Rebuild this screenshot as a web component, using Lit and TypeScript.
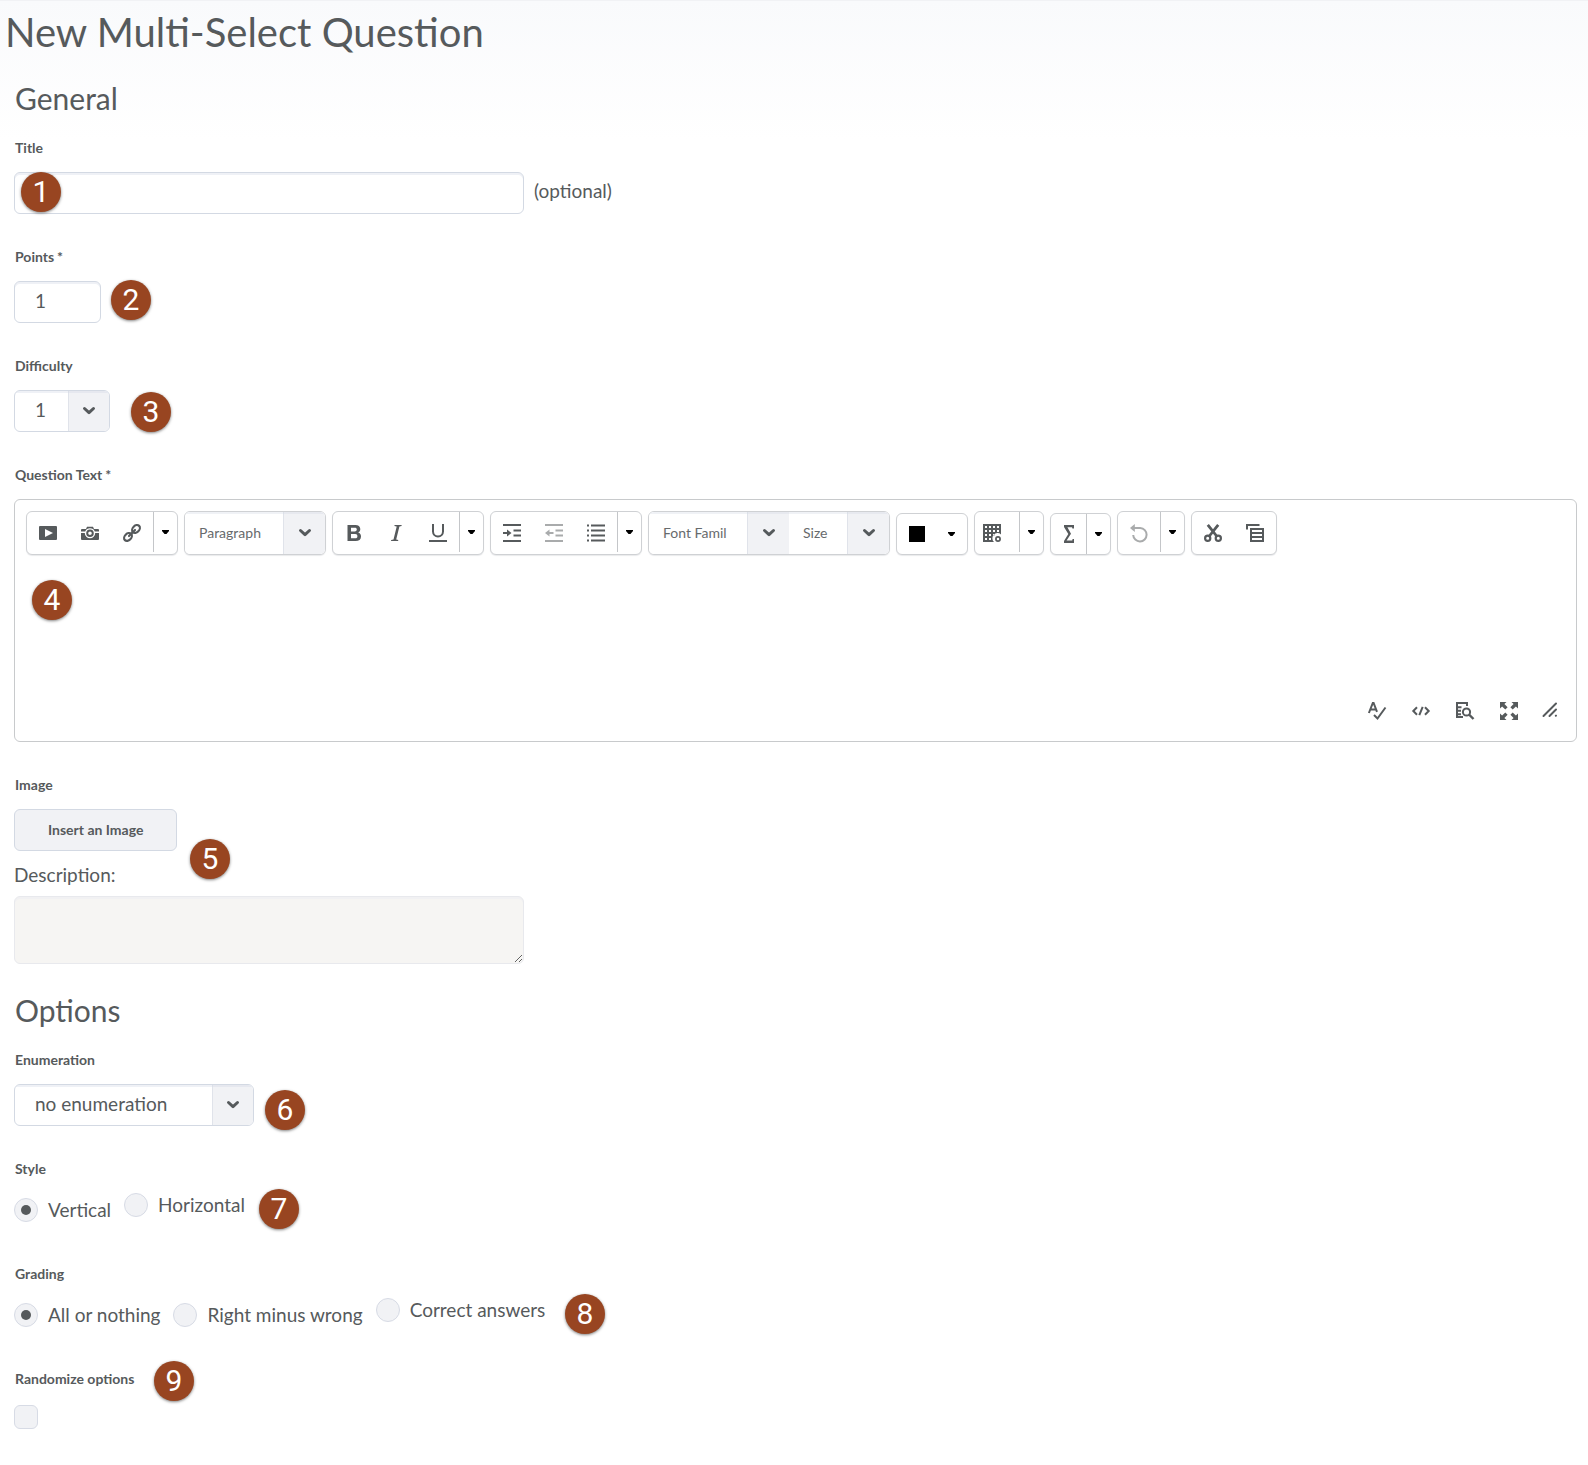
import { LitElement, html, css, svg, TemplateResult } from "lit";
import { customElement } from "lit/decorators.js";

const icon = (body: TemplateResult) =>
  html`<svg class="icon" viewBox="0 0 18 18" width="18" height="18" aria-hidden="true">${body}</svg>`;

const icons = {
  video: svg`<path fill="currentColor" fill-rule="evenodd" d="M1 2h16a1 1 0 0 1 1 1v12a1 1 0 0 1-1 1H1a1 1 0 0 1-1-1V3a1 1 0 0 1 1-1zM6 5v8l8-4z"/>`,
  camera: svg`<path fill="currentColor" d="M1 5h4l1-2.200h6L13 5h4a1 1 0 0 1 1 1v1.500h-4.200a5.200 5.200 0 0 0-9.600 0H0V6a1 1 0 0 1 1-1zM0 9h3.800a5.200 5.200 0 0 0 10.400 0H18v6a1 1 0 0 1-1 1H1a1 1 0 0 1-1-1z"/><circle cx="9" cy="9.300" r="2.800" fill="none" stroke="currentColor" stroke-width="2"/>`,
  link: svg`<g fill="none" stroke="currentColor" stroke-width="2.200"><ellipse cx="13" cy="5" rx="4.400" ry="3.300" transform="rotate(-45 13 5)"/><ellipse cx="5" cy="13" rx="4.400" ry="3.300" transform="rotate(-45 5 13)"/><path d="M6 12l6-6" stroke-linecap="round"/></g>`,
  bold: svg`<path fill="currentColor" fill-rule="evenodd" d="M2.500 1h7.800c3.200 0 5 1.600 5 4.100 0 1.700-.8 2.900-2.200 3.500 1.900.5 2.900 1.900 2.900 3.800 0 2.900-2 4.600-5.500 4.600h-8zM6 3.800v3.600h3.800c1.300 0 2-.6 2-1.800s-.7-1.800-2-1.800zM6 10.100v4.100h4.200c1.500 0 2.200-.7 2.200-2.050s-.7-2.050-2.200-2.050z"/>`,
  italic: svg`<path fill="currentColor" d="M7.600 1h7v1.100l-2.200.3-3.200 13.200 2.100.3-.2 1.100H4l.2-1.100 2.300-.3L9.700 2.400l-2.300-.3z"/>`,
  underline: svg`<path fill="none" stroke="currentColor" stroke-width="2" d="M4 0v7.500a5 5 0 0 0 10 0V0M0 17h18"/>`,
  indent: svg`<path fill="none" stroke="currentColor" stroke-width="2" d="M0 1h18M10.500 6.500H18M10.500 11.500H18M0 17h18M0 9h5"/><path fill="currentColor" d="M4 5.500L8.500 9 4 12.500z"/>`,
  outdent: svg`<path fill="none" stroke="currentColor" stroke-width="2" d="M0 1h18M10.500 6.500H18M10.500 11.500H18M0 17h18M3.500 9h5"/><path fill="currentColor" d="M4.500 5.500L0 9l4.500 3.500z"/>`,
  list: svg`<path fill="none" stroke="currentColor" stroke-width="2" d="M4 1.500h14M4 6.500h14M4 11.500h14M4 16.500h14M0 1.500h2M0 6.500h2M0 11.500h2M0 16.500h2"/>`,
  table: svg`<path fill="currentColor" fill-rule="evenodd" d="M0 0h18v10.500a5 5 0 0 0-7 7.500H0zM2 2v2h2V2zM6 2v2h2V2zM10 2v2h2V2zM14 2v2h2V2zM2 6v2h2V6zM6 6v2h2V6zM10 6v2h2V6zM14 6v2h2V6zM2 10v2h2v-2zM6 10v2h2v-2zM10 10v1.500h1.500V10zM2 14v2h2v-2zM6 14v2h2v-2z"/><circle cx="15" cy="15" r="2.100" fill="none" stroke="currentColor" stroke-width="1.700"/>`,
  sigma: svg`<path fill="currentColor" d="M4 0h10v3.600h-1.600L12 2.200H7.400L11 8.800l-4.400 6.700h5.600l.4-1.600H14V18H4v-1.900l4.300-7.200L4 2z"/>`,
  undo: svg`<path fill="none" stroke="currentColor" stroke-width="2" d="M3 4h7.200a6.700 6.700 0 1 1-7 7"/><path fill="currentColor" d="M4.800 0v8L0 4z"/>`,
  cut: svg`<g fill="none" stroke="currentColor" stroke-width="2.200"><circle cx="3.700" cy="14.300" r="2.600"/><circle cx="14.300" cy="14.300" r="2.600"/></g><path fill="none" stroke="currentColor" stroke-width="2.800" d="M3.800 0.800L12.600 12M14.200 0.800L5.400 12"/>`,
  copy: svg`<path fill="none" stroke="currentColor" stroke-width="2" d="M1 5.500V1h12.500M5 5h12v12H5zM5 9h12M5 13h12"/>`,
  spell: svg`<path fill="none" stroke="currentColor" stroke-width="2" d="M.9 11L4.800 1h.8L9 9.800M2.500 7.500H8M6 13l3.500 3.500L17.500 5.500"/>`,
  source: svg`<path fill="none" stroke="currentColor" stroke-width="2" d="M5 5.200L1.300 9 5 12.800M13 5.200L16.700 9 13 12.800M10.700 4.800L7.300 13.200"/>`,
  preview: svg`<path fill="none" stroke="currentColor" stroke-width="2" d="M1 0v16M0 1h11V4M2 5.200h3.500M2 8.700h3M2 12.200h3M0 15h7"/><circle cx="10.500" cy="10" r="3.600" fill="none" stroke="currentColor" stroke-width="2"/><path stroke="currentColor" stroke-width="2.400" d="M13 12.500l4.500 4.500"/>`,
  full: svg`<path fill="currentColor" d="M0 0h6.500L4.400 2.100 7.600 5.300 5.300 7.600 2.100 4.400 0 6.500zM18 0v6.500L15.900 4.400l-3.200 3.200-2.300-2.300 3.200-3.200L11.500 0zM0 18v-6.500l2.100 2.100 3.200-3.200 2.300 2.300-3.200 3.200L6.500 18zM18 18h-6.500l2.100-2.100-3.200-3.200 2.300-2.300 3.200 3.200 2.100-2.100z"/>`,
  grip: svg`<path fill="none" stroke="currentColor" stroke-width="2" stroke-linecap="round" d="M2.500 16L15 3.500M8.500 16L15 9.500M14.800 15.800l.2-.2"/>`,
};

const caret = html`<svg viewBox="0 0 7 4" width="7" height="4" aria-hidden="true"><path fill="#000" d="M0 0h7v1L4.500 4h-2L0 1z"/></svg>`;

const chevron = html`<span class="arrow" aria-hidden="true"
  ><svg viewBox="0 0 14 10" width="14" height="10"><path d="M2.500 2.500L7 6.700l4.500-4.200" fill="none" stroke="currentColor" stroke-width="3" stroke-linecap="round" stroke-linejoin="round"/></svg
></span>`;

const tool = (name: string, body: TemplateResult, cls = "") =>
  html`<button type="button" class="tool ${cls}" aria-label=${name}>${icon(body)}</button>`;

const more = (name: string, cls = "") =>
  html`<button type="button" class="more ${cls}" aria-label=${name}>${caret}</button>`;

const badge = (n: number) => html`<span class="badge b${n}">${n}</span>`;

@customElement("app-root")
export class AppRoot extends LitElement {
  static styles = css`
    :host {
      display: block;
      min-height: 100vh;
      box-sizing: border-box;
      padding: 7px 11px 20px 14px;
      border-top: 1px solid #f1f2f5;
      background: linear-gradient(#f9fafc, #ffffff 140px);
      font-family: Lato, "Liberation Sans", sans-serif;
      font-size: 19px;
      line-height: 24px;
      color: #565a5c;
    }
    *, *::before { box-sizing: border-box; }
    h1, h2 { margin: 0; font-weight: 400; }
    h1 { font-size: 40px; line-height: 48px; margin: 0 0 24px -9px; }
    h2 { font-size: 30px; line-height: 36px; margin-bottom: 22px; padding-left: 1px; }
    form { margin: 0; }
    button, input, select, textarea { font: inherit; color: inherit; margin: 0; }
    button { padding: 0; border: 0; background: none; cursor: pointer; }
    .field { position: relative; margin: 0 0 33px; padding: 0; border: 0; min-width: 0; }
    .field.last-general { margin-bottom: 28px; }
    .label {
      display: block;
      width: max-content;
      padding: 0 1px;
      margin-bottom: 14px;
      font-size: 14px;
      line-height: 20px;
      font-weight: 700;
    }
    .star { margin-left: 3px; }
    .line { display: flex; align-items: center; gap: 10px; }
    .hint { padding-bottom: 4px; }
    .text {
      display: block;
      height: 42px;
      padding: 0 20px 4px;
      border: 1px solid #d3d9e3;
      border-radius: 6px;
      background: #fff;
      box-shadow: inset 0 2px 0 #eff1f6;
    }
    .wide { width: 100%; max-width: 510px; }
    .points { width: 87px; }
    .pick {
      display: grid;
      grid-template-columns: 1fr auto;
      width: max-content;
      max-width: 100%;
      height: 42px;
      overflow: hidden;
      border: 1px solid #d3d9e3;
      border-radius: 6px;
      background: #fff;
    }
    .pick select {
      grid-area: 1 / 1 / 2 / 3;
      width: 100%;
      height: 100%;
      min-width: 0;
      padding: 0 40px 2px 20px;
      border: 0;
      appearance: none;
      background: transparent;
      box-shadow: inset 0 2px 0 rgba(210, 215, 230, 0.35);
      z-index: 1;
    }
    .arrow {
      grid-area: 1 / 2;
      display: flex;
      align-items: center;
      justify-content: center;
      width: 41px;
      border-left: 1px solid #e0e3ea;
      background: #f1f2f5;
    }
    .level { width: 96px; }
    .enumeration { width: 240px; }
    .editor {
      display: flex;
      flex-direction: column;
      border: 1px solid #c8cacc;
      border-radius: 6px;
      background: #fff;
    }
    .toolbar { display: flex; flex-wrap: wrap; align-items: flex-end; gap: 6px; padding: 11px 11px 0; }
    .group {
      display: flex;
      height: 44px;
      overflow: hidden;
      border: 1px solid #cfd1d4;
      border-radius: 6px;
      background: #fff;
      box-shadow: 0 1px 1px #e9eaec;
    }
    .low { height: 42px; }
    .tool { display: flex; align-items: center; justify-content: center; width: 42px; }
    .off { opacity: 0.5; }
    .slim { width: 35px; }
    .grid { width: 44px; justify-content: flex-start; padding-left: 8px; }
    .more {
      display: flex;
      align-items: center;
      justify-content: center;
      width: 24px;
      height: 40px;
      border-left: 1px solid #c4c6c9;
    }
    .low .more { height: 100%; }
    .plain { border-left: 0; width: 31px; }
    .swatch { display: flex; align-items: center; padding-left: 12px; width: 39px; }
    .swatch span { width: 16px; height: 16px; background: #000; }
    .icon { display: block; overflow: visible; }
    .group .pick { height: 100%; border: 0; border-radius: 0; }
    .group select { padding: 0 42px 0 14px; font-size: 14px; opacity: 0.9; }
    .group .arrow { width: 42px; }
    .paragraph { width: 140px; }
    .family { width: 140px; }
    .size { width: 100px; }
    .writing {
      display: block;
      width: 100%;
      height: 135px;
      padding: 16px 20px;
      border: 0;
      outline: 0;
      resize: none;
      background: transparent;
    }
    .status { display: flex; justify-content: flex-end; gap: 2px; padding: 0 8px 10px; }
    .status .tool { height: 41px; }
    .status .grip { width: 36px; height: 37px; }
    .insert {
      display: block;
      height: 42px;
      padding: 0 33px;
      margin-bottom: 12px;
      border: 1px solid #d3d9e3;
      border-radius: 6px;
      background: #f1f2f5;
      font-size: 14px;
      font-weight: 700;
    }
    .caption { display: block; width: max-content; margin-bottom: 9px; }
    .description {
      display: block;
      height: 68px;
      padding: 10px 20px;
      border: 1px solid #e8e9ed;
      border-radius: 6px;
      background: #f6f5f3;
      box-shadow: inset 0 2px 0 #f1f1f3;
    }
    .choices { display: flex; flex-wrap: wrap; gap: 13px; min-height: 38px; }
    .choice { display: flex; align-items: center; gap: 10px; height: 24px; margin-top: 5px; }
    .choice:last-child { margin-top: 0; }
    .mark {
      display: grid;
      place-items: center;
      flex: none;
      width: 24px;
      height: 24px;
      appearance: none;
      border: 1px solid #d7dbe5;
      border-radius: 50%;
      background: #f1f2f5;
    }
    .mark[type="radio"]:checked::before {
      content: "";
      width: 10px;
      height: 10px;
      border-radius: 50%;
      background: #565a5c;
    }
    .box { border-radius: 6px; margin-top: 16px; }
    .badge {
      position: absolute;
      z-index: 2;
      width: 40px;
      height: 40px;
      border-radius: 50%;
      background: #984521;
      box-shadow: 0 1px 3px rgba(0, 0, 0, 0.5);
      color: #fff;
      font: 400 30px/40px Roboto, "Liberation Sans", sans-serif;
      text-align: center;
      pointer-events: none;
    }
    .b1 { left: 7px; top: 34px; }
    .b2 { left: 97px; top: 33px; }
    .b3 { left: 117px; top: 36px; }
    .b4 { left: 18px; top: 115px; }
    .b5 { left: 176px; top: 64px; }
    .b6 { left: 251px; top: 40px; }
    .b7 { left: 245px; top: -4px; }
    .b8 { left: 551px; top: -4px; }
    .b9 { left: 140px; top: -8px; }
  `;

  private choices(name: string, items: string[]) {
    return html`<div class="choices">
      ${items.map(
        (item, i) => html`<label class="choice"><input class="mark" type="radio" name=${name} ?checked=${i === 0} />${item}</label>`
      )}
    </div>`;
  }

  render() {
    return html`
      <h1>New Multi-Select Question</h1>
      <form>
        <h2>General</h2>
        <div class="field">
          <label class="label" for="title">Title</label>
          <div class="line"><input class="text wide" id="title" type="text" /><span class="hint">(optional)</span></div>
          ${badge(1)}
        </div>
        <div class="field">
          <label class="label" for="points">Points<span class="star">*</span></label>
          <input class="text points" id="points" type="text" .value=${"1"} />
          ${badge(2)}
        </div>
        <div class="field">
          <label class="label" for="difficulty">Difficulty</label>
          <div class="pick level"><select id="difficulty"><option>1</option></select>${chevron}</div>
          ${badge(3)}
        </div>
        <div class="field">
          <label class="label" for="question">Question Text<span class="star">*</span></label>
          <div class="editor">
            <div class="toolbar">
              <div class="group">
                ${tool("Insert Stuff", icons.video)}${tool("Add Image", icons.camera)}${tool("Insert Quicklink", icons.link)}${more("More insert options")}
              </div>
              <div class="group">
                <div class="pick paragraph"><select aria-label="Format"><option>Paragraph</option></select>${chevron}</div>
              </div>
              <div class="group">
                ${tool("Bold", icons.bold)}${tool("Italic", icons.italic)}${tool("Underline", icons.underline)}${more("More text styles")}
              </div>
              <div class="group">
                ${tool("Indent", icons.indent)}${tool("Outdent", icons.outdent, "off")}${tool("Unordered List", icons.list)}${more("More list options")}
              </div>
              <div class="group">
                <div class="pick family"><select aria-label="Font family"><option>Font Famil</option></select>${chevron}</div>
                <div class="pick size"><select aria-label="Font size"><option>Size</option></select>${chevron}</div>
              </div>
              <div class="group low">
                <button type="button" class="swatch" aria-label="Text color"><span></span></button>${more("Choose color", "plain")}
              </div>
              <div class="group">${tool("Table", icons.table, "grid")}${more("Table options")}</div>
              <div class="group low">${tool("Equation", icons.sigma, "slim")}${more("Equation options")}</div>
              <div class="group">${tool("Undo", icons.undo, "off")}${more("More history options")}</div>
              <div class="group">${tool("Cut", icons.cut)}${tool("Copy", icons.copy)}</div>
            </div>
            <textarea class="writing" id="question"></textarea>
            <div class="status">
              ${tool("Check spelling", icons.spell)}${tool("HTML source", icons.source)}${tool("Preview", icons.preview)}${tool("Full screen", icons.full)}${tool("Resize", icons.grip, "grip")}
            </div>
          </div>
          ${badge(4)}
        </div>
        <div class="field last-general">
          <label class="label" for="insert">Image</label>
          <button type="button" class="insert" id="insert">Insert an Image</button>
          <label class="caption" for="description">Description:</label>
          <textarea class="description wide" id="description"></textarea>
          ${badge(5)}
        </div>
        <h2>Options</h2>
        <div class="field">
          <label class="label" for="enumeration">Enumeration</label>
          <div class="pick enumeration"><select id="enumeration"><option>no enumeration</option></select>${chevron}</div>
          ${badge(6)}
        </div>
        <fieldset class="field">
          <legend class="label">Style</legend>
          ${this.choices("style", ["Vertical", "Horizontal"])}${badge(7)}
        </fieldset>
        <fieldset class="field">
          <legend class="label">Grading</legend>
          ${this.choices("grading", ["All or nothing", "Right minus wrong", "Correct answers"])}${badge(8)}
        </fieldset>
        <div class="field">
          <label class="label" for="randomize">Randomize options</label>
          <input class="mark box" id="randomize" type="checkbox" />
          ${badge(9)}
        </div>
      </form>
    `;
  }
}
